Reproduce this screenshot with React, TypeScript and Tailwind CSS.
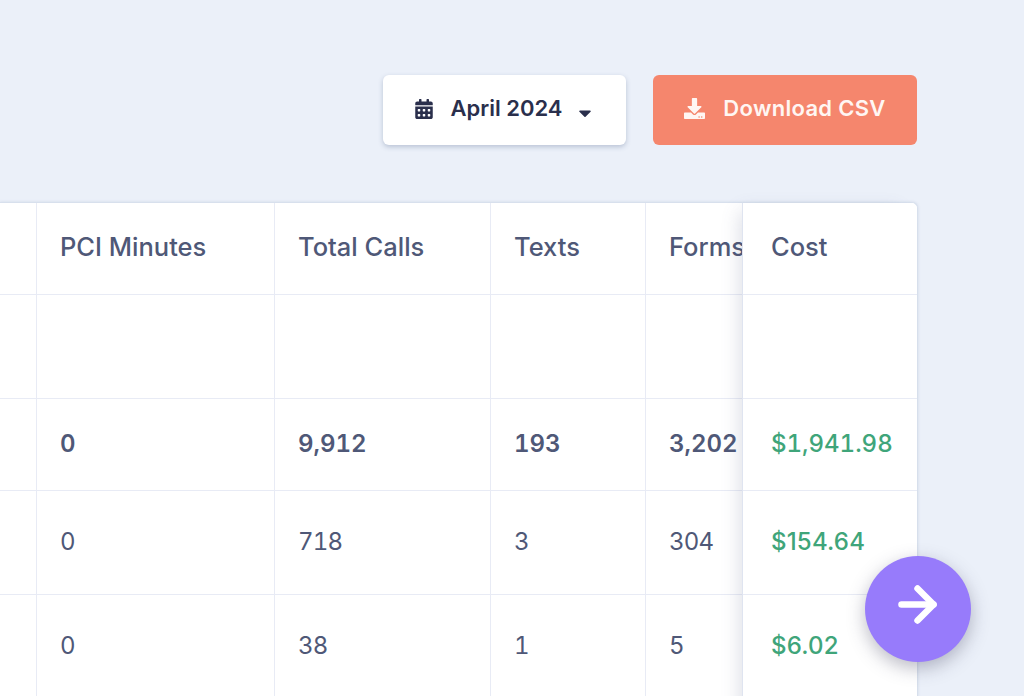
import { ArrowRight } from 'lucide-react'
import { FaCalendarAlt, FaCaretDown, FaDownload } from 'react-icons/fa'

const columns = [
  { label: '', width: 'w-[37px]', values: ['', '', '', ''] },
  { label: 'PCI Minutes', width: 'w-[238px]', values: ['', '0', '0', '0'] },
  { label: 'Total Calls', width: 'w-[216px]', values: ['', '9,912', '718', '38'] },
  { label: 'Texts', width: 'w-[155px]', values: ['', '193', '3', '1'] },
  { label: 'Forms', width: 'w-[160px]', values: ['', '3,202', '304', '5'] },
]

const rowHeights = ['h-[104px]', 'h-[92px]', 'h-[104px]', 'h-[104px]']
const costs = ['', '$1,941.98', '$154.64', '$6.02']

function Cell({ children, height, className }: { children?: React.ReactNode; height: string; className?: string }) {
  return (
    <div className={`${height} flex items-center whitespace-nowrap border-b border-[#e8ebf5] ${className ?? ''}`}>
      {children}
    </div>
  )
}

export default function App() {
  return (
    <div className="relative h-[696px] w-[1024px] overflow-hidden bg-[#ebf0f9] font-['Inter',sans-serif]">
      {/* Actions */}
      <div className="flex justify-end gap-[27px] pr-[107px] pt-[75px]">
        <button className="flex h-[70px] w-[243px] items-center justify-center rounded-[6px] bg-white pb-[3px] pr-[1px] text-[#2a2f4c] shadow-[0_2px_5px_rgba(70,90,130,0.3)]">
          <FaCalendarAlt className="h-[20px] w-[18px]" />
          <span className="ml-[18px] text-[22px] font-semibold">April 2024</span>
          <FaCaretDown className="ml-[15px] mt-[8px] h-[20px] w-[16px]" />
        </button>
        <button className="flex h-[70px] w-[264px] items-center justify-center rounded-[6px] bg-[#f5866d] pb-[3px] text-[#fff6f3]">
          <FaDownload className="h-[21px] w-[21px]" />
          <span className="ml-[18px] text-[22px] font-semibold tracking-[0.3px]">Download CSV</span>
        </button>
      </div>

      {/* Table */}
      <div className="absolute left-0 top-[202px] flex h-[520px] w-[918px] rounded-tr-[6px] border-r border-t border-[#d8e0ed] bg-white shadow-[0_0_3px_rgba(90,110,150,0.18)]">
        <div className="flex w-[742px] overflow-hidden">
          {columns.map((col, i) => (
            <div key={i} className={`${col.width} shrink-0 border-r border-[#e8ebf5] text-[#4f5877]`}>
              <Cell height="h-[92px]" className="pb-[3px] pl-[23px] text-[25.5px] font-medium">{col.label}</Cell>
              {col.values.map((value, j) => (
                <Cell
                  key={j}
                  height={rowHeights[j]}
                  className={`pb-[1px] pl-[23px] text-[24px] tabular-nums ${j === 1 ? 'font-semibold' : 'font-normal tracking-[-0.8px]'}`}
                >
                  {value}
                </Cell>
              ))}
            </div>
          ))}
        </div>
        <div className="relative w-[175px] shrink-0 rounded-tr-[6px] border-l border-[#dfe4f0] bg-white text-[#3fa57a] shadow-[-10px_0_18px_-8px_rgba(80,90,130,0.2)]">
          <Cell height="h-[92px]" className="pb-[3px] pl-[28px] text-[25.5px] font-medium text-[#4f5877]">Cost</Cell>
          {costs.map((cost, j) => (
            <Cell
              key={j}
              height={rowHeights[j]}
              className={`pb-[1px] pl-[28px] font-medium ${j === 1 ? 'text-[24px] tabular-nums' : 'pb-[2px] text-[24px] tracking-[0.2px]'}`}
            >
              {cost}
            </Cell>
          ))}
        </div>
      </div>

      {/* Floating button */}
      <button className="absolute left-[865px] top-[556px] flex h-[106px] w-[106px] items-center justify-center rounded-full bg-[#977bfb] text-white shadow-[0_6px_18px_rgba(60,60,90,0.35)]">
        <ArrowRight className="mb-[9px] mr-[2px] h-[55px] w-[55px]" strokeWidth={2.8} />
      </button>
    </div>
  )
}
